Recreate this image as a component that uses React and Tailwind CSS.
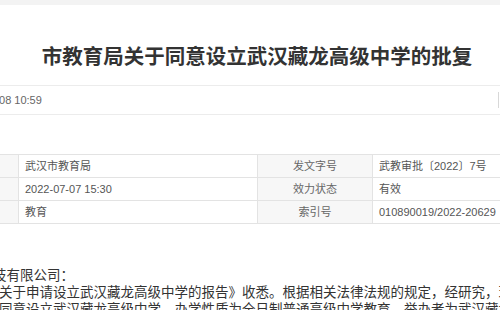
export default function App() {
  const rows = [
    ['发布机构', '武汉市教育局', '发文字号', '武教审批〔2022〕7号'],
    ['成文日期', '2022-07-07 15:30', '效力状态', '有效'],
    ['主题分类', '教育', '索引号', '010890019/2022-20629'],
  ]

  return (
    <div className="w-[500px] h-[310px] overflow-hidden bg-white text-[#333] font-['Liberation_Sans','Noto_Sans_CJK_SC',sans-serif]">
      <div className="h-[5px] bg-[#f3f3f3]" />

      <div className="ml-[-96px] w-[706px] pt-[38px] pb-[14px]">
        <h1 className="text-center text-[20.5px] leading-[28px] font-bold text-[#333] whitespace-nowrap">
          市教育局关于同意设立武汉藏龙高级中学的批复
        </h1>
      </div>

      <div className="h-[30px] border-y border-[#ececec]">
        <div className="ml-[-96px] w-[706px] h-full flex items-center">
          <span className="pl-[51px] text-[11px] text-[#666] whitespace-nowrap">2022-07-08 10:59</span>
          <div className="ml-auto w-[112px] h-[16px] border-l border-[#d8d8d8]" />
        </div>
      </div>

      <div className="ml-[-96px] w-[706px] mt-[39px]">
        <table className="w-full border-collapse table-fixed text-[11px]">
          <colgroup>
            <col className="w-[114px]" />
            <col className="w-[239px]" />
            <col className="w-[115px]" />
            <col />
          </colgroup>
          <tbody>
            {rows.map((r) => (
              <tr key={r[0]} className="h-[23px]">
                <td className="border border-[#e3e3e3] bg-[#f7f7f7] text-center text-[#666]">{r[0]}</td>
                <td className="border border-[#e3e3e3] pl-[6px] text-[#555] whitespace-nowrap">{r[1]}</td>
                <td className="border border-[#e3e3e3] bg-[#f7f7f7] text-center text-[#666]">{r[2]}</td>
                <td className="border border-[#e3e3e3] pl-[6px] text-[#555] whitespace-nowrap">{r[3]}</td>
              </tr>
            ))}
          </tbody>
        </table>
      </div>

      <div className="mt-[43px] text-[13.5px] leading-[17px] text-[#333] whitespace-nowrap">
        <div className="ml-[-7px]">技有限公司：</div>
        <div className="ml-[-1px]">关于申请设立武汉藏龙高级中学的报告》收悉。根据相关法律法规的规定，经研究，现批复如下：</div>
        <div className="ml-[-1px]">同意设立武汉藏龙高级中学，办学性质为全日制普通高级中学教育，举办者为武汉藏龙教育科技有限公司。</div>
      </div>
    </div>
  )
}
